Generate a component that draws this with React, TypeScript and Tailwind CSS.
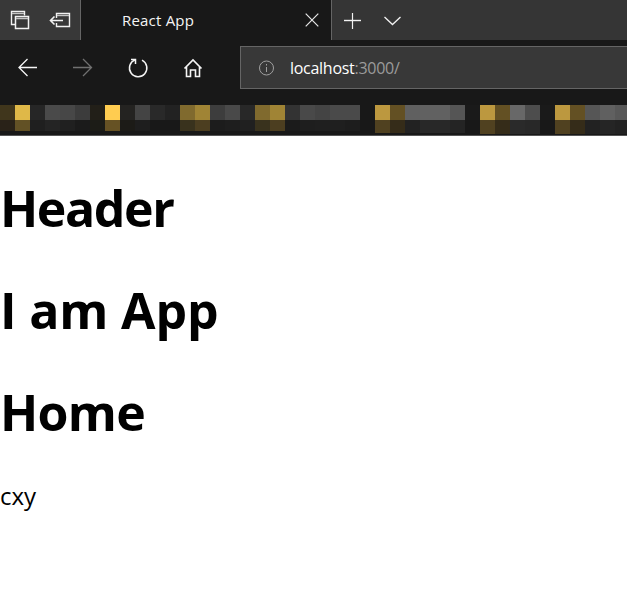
import React from "react";

const favorites: [string, string][] = [
  ["#40361c", "#292218"], ["#dfb848", "#625125"], ["#262626", "#1f1f1f"], ["#4a4a4a", "#242424"],
  ["#474747", "#202020"], ["#3c3c3c", "#1b1b1b"], ["#221f18", "#1c1c17"], ["#ffcc50", "#665224"],
  ["#242321", "#1c1b17"], ["#444444", "#1e1e1e"], ["#292929", "#181818"], ["#222222", "#181818"],
  ["#806a2e", "#39321d"], ["#a08435", "#4c3e20"], ["#3d3d3d", "#1c1c1c"], ["#494949", "#1e1e1e"],
  ["#282828", "#202020"], ["#806a2e", "#39321d"], ["#a08435", "#4c3e20"], ["#333333", "#1b1b1b"],
  ["#494949", "#1e1e1e"], ["#444444", "#1f1f1f"], ["#4a4a4a", "#1f1f1f"], ["#4a4a4a", "#1d1d1d"],
  ["#181818", "#181818"], ["#bc983f", "#504120"], ["#635023", "#352c19"], ["#606060", "#222222"],
  ["#616161", "#282828"], ["#616161", "#282828"], ["#555555", "#242424"], ["#1a1a1a", "#181818"],
  ["#bc983f", "#504120"], ["#635023", "#352c19"], ["#686868", "#2a2a2a"], ["#4d4d4d", "#282828"],
  ["#1a1a1a", "#181818"], ["#bc983f", "#504120"], ["#635023", "#352c19"], ["#565656", "#222222"],
  ["#606060", "#252525"], ["#585858", "#222222"],
];

function TabBar() {
  return (
    <div className="flex h-10 bg-[#353535]">
      <div className="flex w-[81px] shrink-0 border-r border-[#656565] bg-[#383838]">
        <svg width="80" height="40" fill="none" stroke="#f2f2f2">
          <path d="M15.500 24.500h-4v-13h13v4" strokeWidth="1.4" />
          <path d="M12 13.500h12" stroke="#c4c4c4" strokeWidth="1.4" />
          <path d="M15.500 16.500h13v12h-13z" strokeWidth="1.5" />
          <path d="M16 18.500h12" stroke="#c4c4c4" strokeWidth="1.5" />
          <path d="M56.500 18v-4.500h13v13h-13V23" strokeWidth="1.4" />
          <path d="M57 15.500h12" stroke="#c4c4c4" strokeWidth="1.4" />
          <path d="M51 20.500h12M54.500 16.500l-4 4 4 4" strokeWidth="1.6" />
        </svg>
      </div>
      <div className="flex w-[250px] shrink-0 items-center bg-[#181818] pl-[41px]">
        <span className="w-[183px] text-[15px] leading-5 tracking-[0.2px] text-[#f5f5f5]">React App</span>
        <svg width="14" height="14" fill="none" stroke="#e8e8e8" strokeWidth="1.2">
          <path d="M.7.7l12.600 12.600M13.300.7L.7 13.300" />
        </svg>
      </div>
      <div className="border-l border-[#656565]">
        <svg width="90" height="40" fill="none" stroke="#f2f2f2">
          <path d="M12 20.500h17" strokeWidth="1.4" />
          <path d="M20.500 13v16" strokeWidth="1.2" />
          <path d="M52.500 17l8 7.500 8-7.500" strokeWidth="1.3" />
        </svg>
      </div>
    </div>
  );
}

function Toolbar() {
  return (
    <div className="flex h-[65px] bg-[#181818]">
      <svg className="shrink-0" width="240" height="65" fill="none" stroke="#f5f5f5" strokeWidth="1.3">
        <path d="M37 27.500H18.700M27.500 19l-8.500 8.500 8.500 8.500" />
        <path d="M73 27.500h18.300M83 19l8.500 8.500-8.500 8.500" stroke="#707070" />
        <path d="M142 20.200a8.700 8.700 0 1 1-7-.3" strokeWidth="1.5" />
        <path d="M131 19.500h4.500v4.500" strokeWidth="1.5" />
        <path d="M184.500 28.500l8.500-8.500 8.500 8.500M186.500 27v9.500h4v-6.500h5v6.500h4V27" strokeWidth="1.6" />
      </svg>
      <div className="mt-1.5 flex h-[43px] flex-1 items-center border border-r-0 border-[#656565] bg-[#383838] pl-[17px]">
        <svg width="16" height="16" fill="none" stroke="#a0a0a0">
          <circle cx="8.500" cy="8" r="7" />
          <path d="M8.500 7v5M8.500 4v1.500" />
        </svg>
        <span className="ml-4 text-[16px] leading-5 tracking-[-0.28px] text-[#9b9b9b]">
          <span className="text-white">localhost</span>:3000/
        </span>
      </div>
    </div>
  );
}

function FavoritesBar() {
  return (
    <div className="flex h-[30px] overflow-hidden bg-[#181818]">
      {favorites.map(([top, bottom], i) => (
        <div key={i} className="w-[15px] shrink-0">
          <div className="h-[15px]" style={{ backgroundColor: top }} />
          <div
            className={i < 24 ? "h-[11px]" : i < 31 ? "h-[13px]" : "h-[14px]"}
            style={{ backgroundColor: bottom }}
          />
        </div>
      ))}
    </div>
  );
}

export default function App() {
  return (
    <div className="h-[597px] w-[627px] overflow-hidden bg-white font-['Open_Sans','Noto_Sans',sans-serif] text-black">
      <TabBar />
      <Toolbar />
      <FavoritesBar />
      <div className="h-px bg-[#555555]" />
      <main>
        <h1 className="mt-[38px] text-[50px] leading-[68px] font-bold tracking-[-1.4px]">Header</h1>
        <h1 className="mt-[34px] text-[50px] leading-[68px] font-bold tracking-[-0.15px]">I am App</h1>
        <h1 className="mt-[34px] text-[50px] leading-[68px] font-bold tracking-[-0.7px]">Home</h1>
        <div className="mt-[34px] text-[24px] leading-8">cxy</div>
      </main>
    </div>
  );
}
